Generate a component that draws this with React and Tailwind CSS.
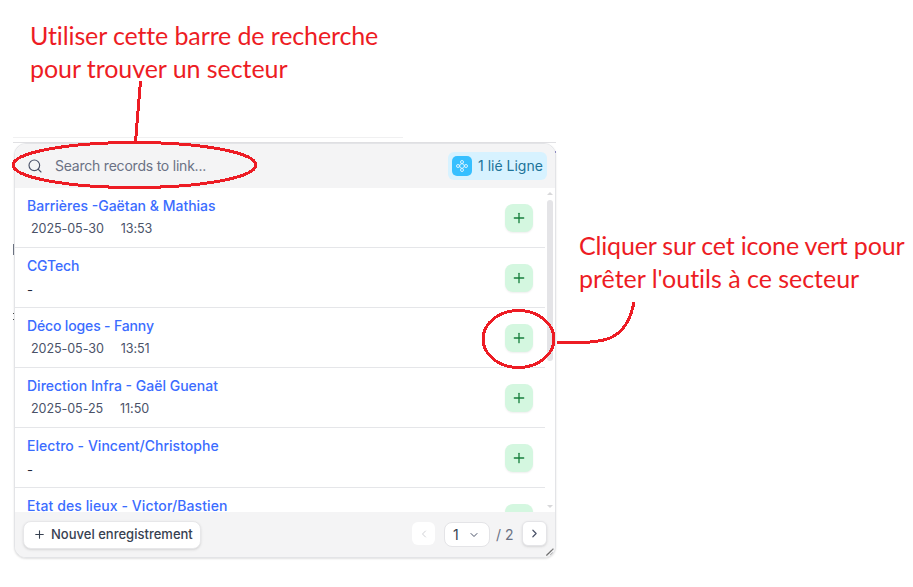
import { ChevronLeft, ChevronRight, ChevronDown, Plus, Search } from "lucide-react";

const records = [
  { name: "Barrières -Gaëtan & Mathias", date: "2025-05-30", time: "13:53", ls: "tracking-[0px]" },
  { name: "CGTech", ls: "tracking-[-0.15px]" },
  { name: "Déco loges - Fanny", date: "2025-05-30", time: "13:51", ls: "tracking-[-0.15px]" },
  { name: "Direction Infra - Gaël Guenat", date: "2025-05-25", time: "11:50", ls: "tracking-[0px]" },
  { name: "Electro - Vincent/Christophe", ls: "tracking-[0.03px]" },
  { name: "Etat des lieux - Victor/Bastien", partial: true, ls: "tracking-[0.09px]" },
];

function Row({ record }) {
  return (
    <li className="flex h-[60px] shrink-0 items-center justify-between border-b border-[#e5e6e9] px-3">
      <div className="flex h-full flex-col pt-2">
        <span className={`h-[19px] whitespace-nowrap text-[14px] font-[450] leading-[19px] text-[#3b6cff] ${record.ls}`}>
          {record.name}
        </span>
        {record.date && (
          <div className="mt-1 flex gap-[17px] pl-1 text-[12.6px] leading-[20px] tracking-[-0.1px] text-[#4a5268]">
            <span className="whitespace-nowrap">{record.date}</span>
            <span className="whitespace-nowrap">{record.time}</span>
          </div>
        )}
        {!record.date && !record.partial && (
          <span className="mt-[5px] text-[13px] leading-[20px] text-[#1f293a]">-</span>
        )}
      </div>
      <button className="flex size-7 items-center justify-center rounded-lg bg-[#d4f7e0] text-[#17803d] shadow-[0_1px_2px_rgba(0,0,0,0.07)]">
        <Plus size={16} strokeWidth={2} />
      </button>
    </li>
  );
}

function RelationIcon() {
  return (
    <svg viewBox="0 0 14 14" className="size-[14px]" fill="none" stroke="#e4f6ff" strokeWidth="0.9">
      <circle cx="7" cy="7" r="2.3" />
      <circle cx="7" cy="3" r="1.5" />
      <circle cx="7" cy="11" r="1.5" />
      <circle cx="3" cy="7" r="1.5" />
      <circle cx="11" cy="7" r="1.5" />
    </svg>
  );
}

export default function App() {
  return (
    <main className="relative h-[587px] w-[913px] overflow-hidden bg-white pl-[13px] pt-[137px] font-['Inter',sans-serif]">
      <div className="h-px w-[390px] bg-[#f0f0f1]" />
      <div className="mt-1 h-[417px] w-[543px] border-t border-[#e0e0e3] pl-px">
        <section className="flex h-[415px] w-[542px] flex-col overflow-hidden rounded-xl border border-[#e3e4e7] bg-white shadow-[0_1px_2px_rgba(0,0,0,0.12)]">
          <header className="flex h-[44px] shrink-0 items-center justify-between bg-[#f4f4f5] pl-3 pr-2">
            <label className="flex items-center gap-3 text-[#4a5268]">
              <Search size={16} strokeWidth={1.7} />
              <span className="whitespace-nowrap text-[14px] leading-5 tracking-[-0.22px] text-[#6a7184]">Search records to link...</span>
            </label>
            <div className="flex h-7 w-[99px] items-center rounded-md bg-[#d7f2ff] pl-1 text-[#207399]">
              <span className="flex size-5 shrink-0 items-center justify-center rounded-[5px] bg-[#36bfff]">
                <RelationIcon />
              </span>
              <span className="ml-[6px] whitespace-nowrap text-[14px] leading-[26px]">1 lié Ligne</span>
            </div>
          </header>
          <div className="flex min-h-0 flex-1">
            <ul className="flex w-[530px] flex-col overflow-hidden">
              {records.map((record) => (
                <Row key={record.name} record={record} />
              ))}
            </ul>
            <div className="flex flex-1 flex-col items-center pt-1">
              <i className="size-0 border-x-[3px] border-b-[3px] border-x-transparent border-b-[#d8d8da]" />
              <i className="mt-[5px] h-[161px] w-[6px] rounded-full bg-[#e4e4e7]" />
              <i className="mb-1 mt-auto size-0 border-x-[3px] border-t-[3px] border-x-transparent border-t-[#d8d8da]" />
            </div>
          </div>
          <footer className="relative flex h-[45px] shrink-0 items-center bg-[#f4f4f5] px-2">
            <button className="flex h-7 w-[178px] items-center rounded-lg border border-[#e7e7e9] bg-white pl-[9px] text-[13px] font-medium text-[#374151] shadow-sm">
              <Plus size={13} strokeWidth={2} />
              <span className="ml-[5px] whitespace-nowrap tracking-[0.01px]">Nouvel enregistrement</span>
            </button>
            <button className="mb-0.5 ml-auto flex size-[23px] items-center justify-center rounded-md bg-white text-[#d1d2d6]">
              <ChevronLeft size={12} strokeWidth={2} />
            </button>
            <button className="ml-[9px] flex h-[25px] w-[46px] items-center justify-between rounded-lg border border-[#e4e4e7] bg-white pl-2 pr-[9px] text-[14px] text-[#374151]">
              1 <ChevronDown size={12} className="text-[#4a5268]" />
            </button>
            <span className="ml-[6px] w-[20px] whitespace-nowrap pb-px text-[14px] text-[#6a7184]">/ 2</span>
            <button className="mb-0.5 ml-[6px] flex size-[25px] items-center justify-center rounded-md border border-[#e4e4e7] bg-white text-[#4a5268] shadow-sm">
              <ChevronRight size={13} strokeWidth={2.2} />
            </button>
            <svg className="absolute bottom-[1px] right-[1px]" width="8" height="8" stroke="#444" strokeWidth="1.1">
              <path d="M0.500 7.500 7.500 0.500M4.500 7.500l3-3" strokeDasharray="1.100 0.300" />
            </svg>
          </footer>
        </section>
      </div>

      <i className="absolute left-[13px] top-[244px] h-[11px] w-px bg-[#6b7280]" />
      <i className="absolute left-[13px] top-[313px] size-px bg-[#444]" />
      <i className="absolute left-[13px] top-[319px] size-px bg-[#444]" />
      <i className="absolute left-[555px] top-[151px] h-[2px] w-px bg-[#8d8ac0]" />

      <p className="absolute left-[30px] top-[19px] font-['Lato',sans-serif] text-[25px] leading-[33px] text-[#ed1c24]">
        <span className="block whitespace-nowrap tracking-[-0.12px]">Utiliser cette barre de recherche</span>
        <span className="block whitespace-nowrap tracking-[-0.06px]">pour trouver un secteur</span>
      </p>
      <p className="absolute left-[579px] top-[229px] font-['Lato',sans-serif] text-[25px] leading-[33px] text-[#ed1c24]">
        <span className="block whitespace-nowrap tracking-[-0.18px]">Cliquer sur cet icone vert pour</span>
        <span className="block whitespace-nowrap tracking-[-0.02px]">prêter l'outils à ce secteur</span>
      </p>
      <svg className="absolute inset-0" width="913" height="587" fill="none" stroke="#ed1c24" strokeWidth="3" shapeRendering="crispEdges">
        <path d="M140.500 81 135.500 142" />
        <ellipse cx="134.500" cy="165" rx="121.500" ry="22.500" />
        <ellipse cx="518.500" cy="339" rx="35.500" ry="28.500" />
        <path d="M557 342C604 345 627 341 634 302" />
      </svg>
    </main>
  );
}
